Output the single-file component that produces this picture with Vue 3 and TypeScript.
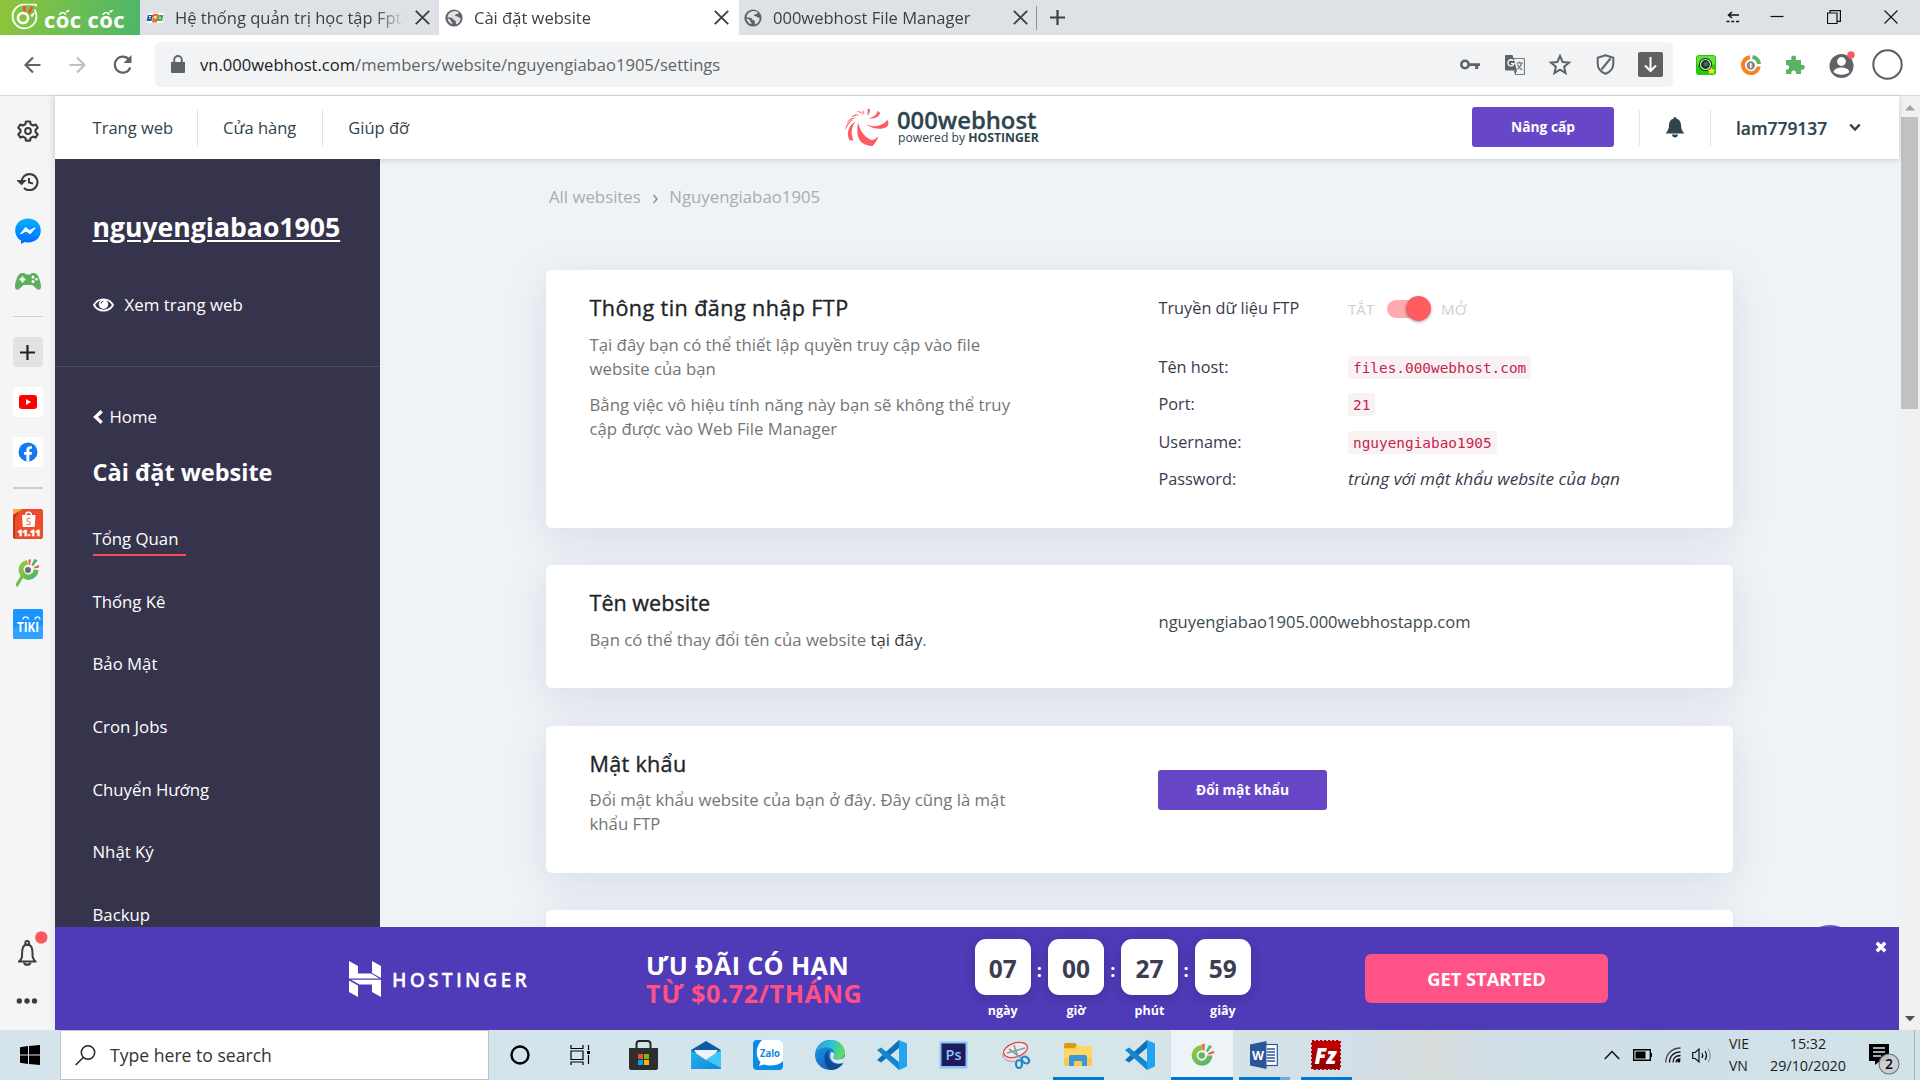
<script setup lang="ts">
interface Tab { title: string; icon: 'fpt' | 'globe'; active?: boolean }
interface TaskItem { id: string; state?: 'open' | 'active' | 'multi' }

const tabs: Tab[] = [
  { title: 'Hệ thống quản trị học tập Fpt', icon: 'fpt' },
  { title: 'Cài đặt website', icon: 'globe', active: true },
  { title: '000webhost File Manager', icon: 'globe' },
]

const topNav: string[] = ['Trang web', 'Cửa hàng', 'Giúp đỡ']

const menu: string[] = ['Tổng Quan', 'Thống Kê', 'Bảo Mật', 'Cron Jobs', 'Chuyển Hướng', 'Nhật Ký', 'Backup']

const ftpRows: { label: string; value: string; code: boolean }[] = [
  { label: 'Tên host:', value: 'files.000webhost.com', code: true },
  { label: 'Port:', value: '21', code: true },
  { label: 'Username:', value: 'nguyengiabao1905', code: true },
  { label: 'Password:', value: 'trùng với mật khẩu website của bạn', code: false },
]

const countdown: { value: string; unit: string }[] = [
  { value: '07', unit: 'ngày' },
  { value: '00', unit: 'giờ' },
  { value: '27', unit: 'phút' },
  { value: '59', unit: 'giây' },
]

const tasks: TaskItem[] = [
  { id: 'cortana' }, { id: 'taskview' }, { id: 'store' }, { id: 'mail' }, { id: 'zalo' },
  { id: 'edge' }, { id: 'vscode' }, { id: 'ps' }, { id: 'snip' },
  { id: 'explorer', state: 'open' }, { id: 'vscode' }, { id: 'coccoc', state: 'active' },
  { id: 'word', state: 'multi' }, { id: 'filezilla', state: 'open' },
]
</script>

<template>
  <div class="desktop">
    <!-- shared icon shapes -->
    <svg class="defs" width="0" height="0">
      <defs>
        <linearGradient id="gMail" x1="0" y1="0" x2="1" y2="1"><stop offset="0" stop-color="#28b4ee" /><stop offset="1" stop-color="#1186d6" /></linearGradient>
        <linearGradient id="gEdgeTop" x1="0" y1="0.3" x2="1" y2="0.5"><stop offset="0" stop-color="#2aa3e0" /><stop offset="0.5" stop-color="#2fc3cf" /><stop offset="1" stop-color="#66dc5a" /></linearGradient>
        <linearGradient id="gEdge" x1="0" y1="0" x2="0.6" y2="1"><stop offset="0" stop-color="#1c9fe4" /><stop offset="1" stop-color="#0d5fc0" /></linearGradient>
        <linearGradient id="gCoc" x1="0" y1="0" x2="1" y2="1"><stop offset="0" stop-color="#9ccb3b" /><stop offset="1" stop-color="#45b36b" /></linearGradient>
        <linearGradient id="gMsg" x1="0" y1="0" x2="0" y2="1"><stop offset="0" stop-color="#00b2ff" /><stop offset="1" stop-color="#006aff" /></linearGradient>
        <linearGradient id="gFz" x1="0" y1="0" x2="0" y2="1"><stop offset="0" stop-color="#c80000" /><stop offset="1" stop-color="#8b0000" /></linearGradient>
      </defs>
      <symbol id="i-globe" viewBox="0 0 18 18">
        <circle cx="9" cy="9" r="8.6" fill="#5f6368" />
        <path d="M8.2 2.2c2-.7 4.6 0 6 1.700c-.9.200-1.300 1-2.600 1.100c-.6.800-1.500.700-1.700 1.700c.9.600 2.200.100 3 1.100c.5 1 2.200.900 2.800 1.400c-.2 3-2 5.300-4.400 6.200c-1.100-1.300.200-2.700-1-3.800c-1.200-.5-2.400-.6-2.500-2.300c-2-.9-4-.4-5.300-1.300c.3-3 2.700-5.300 5.700-5.800z" fill="#dee1e6" />
        <path d="M2.500 9.500c1.200.4 2.700.4 3.300 2c.2 1.300 1.600 1.400 1.800 3.700c-2.700-.6-4.700-2.700-5.100-5.700z" fill="#dee1e6" />
      </symbol>
      <symbol id="i-coc" viewBox="0 0 30 32">
        <path d="M15 4.500a12 12 0 1 0 12 12h-6.200a6 6 0 1 1-6.200-6z" fill="url(#gCoc)" />
        <circle cx="14.700" cy="16.500" r="3.700" fill="#68b55d" />
        <path d="M15.500 10.500l-.4-7 3-.8-.2 8z M22 14l6.500-3 .8 2.800-6.500 1.800z" fill="#ef5a3c" />
        <path d="M19.500 11.500l4-7.200 3 1.800-5 6.800z" fill="#4fb869" />
      </symbol>
    </svg>

    <div class="tabbar">
      <div class="brand">
        <svg width="29" height="30" viewBox="0 0 29 30">
          <path d="M14 2.500a12 12 0 1 0 13.500 12c0-3-.8-5-1.800-6.800M14 2.500h13v2" fill="none" stroke="#fff" stroke-width="1.700" />
          <circle cx="14" cy="16" r="5" fill="none" stroke="#fff" stroke-width="2.600" />
          <path d="M14.500 9.500l-.8-5.500h3.200l-.3 6z" fill="#f04f3a" /><path d="M19 10.500l2.500-6 3 .8-3.600 6.800z" fill="#f04f3a" />
          <path d="M21.500 13l5.500-3.500-4 6z" fill="#fff" />
        </svg>
        <span class="brand-name">cốc cốc</span>
      </div>
      <div v-for="tab in tabs" :key="tab.title" class="tab" :class="{ active: tab.active }">
        <svg v-if="tab.icon === 'fpt'" class="fav" width="18" height="18" viewBox="0 0 18 18">
          <path d="M3 4h14l1 3-2 7H1l-1-3z" fill="#fff" />
          <path d="M2 6h5l-1.500 6H.5z" fill="#2557a7" /><path d="M7 4.800h5.500L11 13.500H6z" fill="#f26f21" /><path d="M12.500 6h5L16 12h-5z" fill="#3aa648" />
          <path d="M3 7.500h2M3 9.300h1.500M8.500 7.500h1.500v1.500H8.200zM14 7.500v3" stroke="#fff" stroke-width="1" fill="none" />
        </svg>
        <svg v-else class="fav" width="18" height="18"><use href="#i-globe" /></svg>
        <span class="tab-title">{{ tab.title }}</span>
        <svg class="tab-x" width="15" height="15" viewBox="0 0 15 15"><path d="M.8.8l13.400 13.400M14.200.8L.8 14.200" stroke="#3c4043" stroke-width="1.900" /></svg>
      </div>
      <div class="newtab">
        <svg width="15" height="15" viewBox="0 0 15 15"><path d="M7.500 0v15M0 7.500h15" stroke="#3c4043" stroke-width="2.200" /></svg>
      </div>
      <div class="winctl">
        <svg class="w-arrow" width="14" height="12" viewBox="0 0 14 12"><path d="M13 4H3M6 1L2.500 4 6 7" fill="none" stroke="#111" stroke-width="1.500" /><path d="M.5 10.500h13" stroke="#111" stroke-width="1.500" stroke-dasharray="3 1.800" /></svg>
        <svg class="w-min" width="14" height="12" viewBox="0 0 14 12"><path d="M.5 5.500h13" stroke="#111" stroke-width="1.200" /></svg>
        <svg class="w-max" width="14" height="14" viewBox="0 0 14 14"><path d="M.5 3h9.500v10.500H.5zM3 3V.6h10.400v10.800H10" fill="none" stroke="#111" stroke-width="1.200" /></svg>
        <svg class="w-close" width="14" height="14" viewBox="0 0 14 14"><path d="M.5.5l13 13M13.500.5l-13 13" stroke="#111" stroke-width="1.100" /></svg>
      </div>
    </div>

    <div class="toolbar">
      <div class="cell"><svg width="17" height="18" viewBox="0 0 17 18"><path d="M16.500 9H2M9 1.500L1.500 9 9 16.500" fill="none" stroke="#5f6368" stroke-width="2.200" /></svg></div>
      <div class="cell"><svg width="17" height="18" viewBox="0 0 17 18"><path d="M.5 9H15M8 1.500L15.500 9 8 16.500" fill="none" stroke="#bdc1c6" stroke-width="2.200" /></svg></div>
      <div class="cell"><svg width="20" height="20" viewBox="0 0 20 20"><path d="M17.300 12.500A8 8 0 1 1 16 4.500" fill="none" stroke="#5f6368" stroke-width="2.200" /><path d="M18.500 0v8h-8z" fill="#5f6368" /></svg></div>
      <div class="omnibox">
        <svg class="lock" width="14" height="18" viewBox="0 0 14 18"><path d="M0 7h14v10q0 1-1 1H1q-1 0-1-1z" fill="#5f6368" /><path d="M3.200 7.500V4.800a3.800 3.800 0 0 1 7.600 0v2.700" fill="none" stroke="#5f6368" stroke-width="1.900" /></svg>
        <span class="url">vn.000webhost.com<span class="path">/members/website/nguyengiabao1905/settings</span></span>
        <div class="omni-icons">
          <div class="cell key"><svg width="20" height="11" viewBox="0 0 20 11"><circle cx="5" cy="5.500" r="3.700" fill="none" stroke="#5f6368" stroke-width="2.600" /><path d="M9 4.200h11v2.800h-1.800v3h-3v-3H9z" fill="#5f6368" /></svg></div>
          <div class="cell key">
            <svg width="20" height="20" viewBox="0 0 20 20">
              <path d="M8.500 3.500h10q1 0 1 1v14q0 1-1 1h-8z" fill="none" stroke="#7a7d81" stroke-width="1.200" />
              <path d="M1 0h6.500L12 15.500H1q-1 0-1-1V1q0-1 1-1z" fill="#5f6368" /><path d="M9 15.500h3l-1.700 4z" fill="#5f6368" />
              <path d="M8.400 5.900A3.100 3.100 0 1 0 9 8.600H6" fill="none" stroke="#fff" stroke-width="1.300" />
              <path d="M11.500 8h6.500M14.700 6.500V8M16.500 8c-.5 3-2 4.800-4 6M12.500 9.500c1 2.500 2.500 4 4.500 5.500" fill="none" stroke="#6f7276" stroke-width="1.200" />
            </svg>
          </div>
          <div class="cell key"><svg width="22" height="21" viewBox="0 0 22 21"><path d="M11 2l2.600 6 6.400.6-4.900 4.200 1.500 6.300L11 15.700l-5.600 3.400 1.500-6.300L2 8.600 8.400 8z" fill="none" stroke="#5f6368" stroke-width="2" /></svg></div>
          <div class="cell"><svg width="19" height="21" viewBox="0 0 19 21"><path d="M9.500 1.200l7.800 2.600v6c0 5-3.300 8.300-7.800 10.100C5 18.100 1.700 14.800 1.700 9.800v-6z M5.500 15.500L14.500 4.500" fill="none" stroke="#5f6368" stroke-width="2" /></svg></div>
          <div class="cell"><svg width="25" height="25" viewBox="0 0 25 25"><rect width="25" height="25" rx="2" fill="#5f6062" /><path d="M12.500 5v14M7 13.500l5.500 5.500 5.500-5.500" fill="none" stroke="#fff" stroke-width="2" /></svg></div>
        </div>
      </div>
      <div class="ext-icons">
        <div class="cell">
          <svg width="20" height="20" viewBox="0 0 20 20"><rect width="20" height="20" rx="3" fill="#28c80b" /><rect x="1" y="1" width="18" height="9" rx="2" fill="#66e23c" /><circle cx="9.500" cy="9.500" r="6.600" fill="#10331a" /><circle cx="9.500" cy="9.500" r="5" fill="none" stroke="#d4e9d5" stroke-width="1.200" /><circle cx="10" cy="9" r="2.600" fill="#2f7a3c" /><path d="M15.500 12l1.200 2.500 2.800.3-2 1.900.6 2.800-2.600-1.400-2.500 1.400.5-2.800-2-1.900 2.800-.3z" fill="#ffe02e" /></svg>
        </div>
        <div class="cell">
          <svg width="20" height="20" viewBox="0 0 20 20"><path d="M9 2.200A8 8 0 1 0 17.800 11.500" fill="none" stroke="#f5831f" stroke-width="4" /><path d="M11.500 2a7.800 7.800 0 0 1 6.500 7" fill="none" stroke="#5bb35f" stroke-width="4" /><circle cx="9.800" cy="10.500" r="4.200" fill="#8a8a8a" /><path d="M9.800 8.300v4.500" stroke="#fff" stroke-width="1.600" /></svg>
        </div>
        <div class="cell"><svg width="19" height="20" viewBox="0 0 19 20"><path d="M0 5h5.500C5 3.500 5 .5 7.700.5S10.300 3.500 9.800 5H15v5c1.500-.5 3.800 0 3.800 2.300S16.500 15 15 14.500V19H10c.5-2-.5-3.500-2.300-3.500S5 17 5.500 19H0v-4.500c2 .3 3.200-.6 3.200-2.300S2 9.800 0 10z" fill="#5cb260" /></svg></div>
        <div class="cell profile">
          <svg width="26" height="30" viewBox="0 0 26 30"><circle cx="12.500" cy="16" r="12" fill="#5f6368" /><circle cx="12.500" cy="11.500" r="4.400" fill="#fff" /><path d="M4.500 22c1-3.800 5-4.600 8-4.600s7 .8 8 4.600c-2 2-5 2.700-8 2.700s-6-.7-8-2.700z" fill="#fff" /><circle cx="22" cy="5" r="3.700" fill="#fc5a5e" /></svg>
        </div>
        <div class="cell last"><svg width="31" height="31" viewBox="0 0 31 31"><circle cx="15.500" cy="15.500" r="14.200" fill="#fff" stroke="#5b5d60" stroke-width="2" /></svg></div>
      </div>
    </div>

    <div class="main">
      <div class="strip">
        <div class="sicon"><svg width="22" height="22" viewBox="0 0 22 22"><path d="M9 1.500h4l.7 2.800 2.400 1.200 2.600-1 2 3.300-2.100 2v2.400l2.100 2-2 3.300-2.600-.9-2.400 1.300-.7 2.700H9l-.7-2.700-2.400-1.300-2.600.9-2-3.300 2.100-2V9.800l-2.100-2 2-3.300 2.600 1 2.400-1.200z" fill="none" stroke="#3c3c3c" stroke-width="2.200" stroke-linejoin="round" /><circle cx="11" cy="11" r="2.900" fill="none" stroke="#3c3c3c" stroke-width="2" /></svg></div>
        <div class="sicon hist"><svg width="22" height="18" viewBox="0 0 22 18"><path d="M4.500 10A8 8 0 1 1 7 15" fill="none" stroke="#3c3c3c" stroke-width="2.100" /><path d="M.5 7.500l4 4 4-4z" fill="#3c3c3c" stroke="#3c3c3c" stroke-width="1.200" /><path d="M12 5v4.500l4 1" fill="none" stroke="#3c3c3c" stroke-width="2" /></svg></div>
        <div class="sicon"><svg width="26" height="26" viewBox="0 0 26 26"><path d="M13 .5c7.500 0 12.800 5 12.800 12S20.500 24.500 13 24.500c-1.200 0-2.300-.1-3.400-.4L6 26v-3.500C2.400 20.400.2 16.800.2 12.500.2 5.500 5.500.5 13 .5z" fill="url(#gMsg)" /><path d="M5.500 16l5-6.500 4 3 5.800-2.700-5.200 6-4-2.900z" fill="#fff" stroke="#fff" stroke-width="1" stroke-linejoin="round" /></svg></div>
        <div class="sicon"><svg width="26" height="17" viewBox="0 0 26 17"><path d="M6.500 0h3l1.200 1.500h4.600L16.500 0h3C23 0 26 9 26 13.500c0 3.500-2.500 4-4.500 2.200L17.500 12h-9l-4 3.700C2.500 17.500 0 17 0 13.500 0 9 3 0 6.500 0z" fill="#5cb05a" /><path d="M7.500 3.500v6M4.500 6.500h6" stroke="#fff" stroke-width="2" /><g fill="#fff"><circle cx="18" cy="4" r="1.500" /><circle cx="18" cy="8.500" r="1.500" /><circle cx="21.500" cy="6.300" r="1.300" /></g></svg></div>
        <div class="ssep first"></div>
        <div class="tile plus"><svg width="15" height="15" viewBox="0 0 15 15"><path d="M7.500 0v15M0 7.500h15" stroke="#222" stroke-width="2.200" /></svg></div>
        <div class="tile"><svg width="18" height="14" viewBox="0 0 18 14"><rect width="18" height="14" rx="3" fill="#f00" /><path d="M7 4l5 3-5 3z" fill="#fff" /></svg></div>
        <div class="tile"><svg width="20" height="20" viewBox="0 0 20 20"><circle cx="10" cy="10" r="9.500" fill="#1877f2" /><path d="M8.400 19.500v-6.800H6V10h2.400V8c0-2.500 1.500-3.800 3.700-3.800l1.900.1v2.400h-1.200c-1.200 0-1.500.6-1.500 1.500V10H14l-.4 2.700h-2.300v6.800z" fill="#fff" /></svg></div>
        <div class="ssep second"></div>
        <div class="tile shopee">
          <svg width="30" height="30" viewBox="0 0 30 30"><rect width="30" height="30" rx="2" fill="#ee4d2d" /><path d="M0 2q0-2 2-2h7L0 7z" fill="#f9b233" /><path d="M0 6l6-4-4 7v20H0z" fill="#c4321b" /><path d="M9 6h13.500l-.8 12H9.800z" fill="#fff" /><path d="M12.500 7c0-5 6-5 6 0" fill="none" stroke="#fff" stroke-width="1.300" /><text x="15.700" y="15.500" text-anchor="middle" class="svgt" font-size="9.500" font-weight="400" fill="#ee4d2d">S</text><text x="16" y="26.800" text-anchor="middle" class="svgt" font-size="9" font-weight="800" fill="#fff" stroke="#fff" stroke-width=".5" textLength="23">11.11</text></svg>
        </div>
        <div class="sicon coc">
          <svg width="23" height="28" viewBox="0 0 23 28"><path d="M11 1a10 10 0 1 0 11.500 10l-5-.5a5 5 0 1 1-5.500-5z" fill="url(#gCoc)" /><circle cx="12" cy="11" r="3" fill="#6b6b70" /><path d="M5.500 18.500L1 26" stroke="#74bf4b" stroke-width="3.200" stroke-linecap="round" /><path d="M12.500 5.500l0-5h2.500l-1 5.500zM18 8l5-2v2.500L18.500 9.500z" fill="#f05a3c" /><path d="M15.500 6l3-6 3 1.200-4.500 6z" fill="#43ae6e" /></svg>
        </div>
        <div class="tile tiki">
          <svg width="30" height="30" viewBox="0 0 30 30"><rect width="30" height="30" rx="2" fill="#1a94ff" /><path d="M0 20c8-5 14 2 30-4v12q0 2-2 2H2q-2 0-2-2z" fill="#2fa3ff" /><text x="15" y="23" text-anchor="middle" class="svgt" font-size="14" font-weight="700" fill="#fff" textLength="22" lengthAdjust="spacingAndGlyphs">TIKI</text><path d="M10 10.500c.5-3.500 5-3.500 5.500 0M22 10.500c.5-3.500 4.500-3.500 5 0" fill="none" stroke="#fff" stroke-width="1.300" /></svg>
        </div>
        <div class="strip-bottom">
          <svg class="sbell" width="32" height="36" viewBox="0 0 32 36"><path d="M2 30.500h18.500M4 30l2-4c0-8 .5-12.500 5.300-12.500s5.300 4.500 5.300 12.500l2 4" fill="none" stroke="#3c3c3c" stroke-width="2" /><circle cx="11.200" cy="12" r="2" fill="none" stroke="#3c3c3c" stroke-width="1.800" /><path d="M8 31.500c.5 3 6 3 6.500 0" fill="none" stroke="#3c3c3c" stroke-width="2" /><circle cx="25.300" cy="6.500" r="6.200" fill="#fc5a5e" /></svg>
          <svg width="22" height="6" viewBox="0 0 22 6"><g fill="#3c3c3c"><circle cx="3.300" cy="3" r="2.700" /><circle cx="11" cy="3" r="2.700" /><circle cx="18.500" cy="3" r="2.700" /></g></svg>
        </div>
      </div>

      <div class="page">
        <header class="phead">
          <nav class="pnav"><span v-for="n in topNav" :key="n">{{ n }}</span></nav>
          <div class="plogo">
            <svg width="44" height="38" viewBox="0 0 44 38">
              <g fill="#ff5c62">
                <path d="M13 13.500c2 7 5 14 13.500 17.500 2.500 0 4.500-1.500 7-3.700-1.500 4.700-3.500 7-6 9.700-9-.5-14-4.500-15-12-.5-4 0-8 .5-11.500z" />
                <path d="M20 14.500c6 4 15 4.500 22.500-3.500 2.500 4.500 0 9-9 8.700-6-.4-10.500-2.200-13.500-5.200z" />
                <path d="M10.500 12.500C3.500 16.500 1 24 4.500 31.500L8.500 31.500C5.500 24 6.500 18 10.500 12.500z" />
                <path d="M8.500 10.500C3 12.500.5 16 .5 21.500 2 16.500 4.500 13.500 8.500 10.500z" />
                <path d="M11 8.500C6 8.500 3 11 1.500 14 4.500 11.500 7 10 11 8.500z" />
                <path d="M14 6c-3.500-1-6 0-8 2.500 3-1.500 5-1.700 8-2.500z" /><path d="M18 5c-2-2.500-4-3-6.500-2.500 2.500.5 4 1.300 6.500 2.500z" />
                <path d="M22 6.500c1-2.500 1-4.500.5-6.500h2.500c.3 2.500-.5 5-3 6.500z" />
                <path d="M23.500 9.500c4-1 8-3 9-7.500 1.500.5 2.500 1.500 2.500 2.500-1.500 4-6.500 5.500-11.500 5z" />
                <path d="M17 6.500c1.500-2 1-4 0-6 2.500 2 2.500 4 0 6z" />
              </g>
            </svg>
            <div class="plogo-text"><span class="l1">000webhost</span><span class="l2">powered by <b>HOSTINGER</b></span></div>
          </div>
          <button class="btn upgrade">Nâng cấp</button>
          <div class="pbell"><svg width="20" height="21" viewBox="0 0 20 21"><path d="M10 0q1.500 0 1.600 1.700c3 .8 4.200 3 4.400 6 .2 4.500 1.200 6.300 3.500 8.800H.5c2.300-2.500 3.300-4.300 3.500-8.800.2-3 1.400-5.200 4.400-6Q8.500 0 10 0zM7 17.500h6c0 4-6 4-6 0z" fill="#2f444e" /></svg></div>
          <div class="puser"><span>lam779137</span><svg width="12" height="9" viewBox="0 0 12 9"><path d="M1.200 1.500L6 6.500l4.800-5" fill="none" stroke="#2f444e" stroke-width="2.500" /></svg></div>
        </header>

        <div class="pbody">
          <aside class="side">
            <div class="side-top">
              <div class="site">nguyengiabao1905</div>
              <div class="view">
                <svg width="21" height="14" viewBox="0 0 21 14"><path d="M1 7c4-7.500 15-7.500 19 0-4 7.500-15 7.500-19 0z" fill="none" stroke="#fff" stroke-width="1.800" /><circle cx="10.500" cy="6.200" r="4.700" fill="#fff" /><path d="M8 5.500q.3-2 2.300-2.300" stroke="#36344c" stroke-width="1" fill="none" /></svg>
                <span>Xem trang web</span>
              </div>
            </div>
            <div class="home"><svg width="10" height="14" viewBox="0 0 10 14"><path d="M8.700 1.200L2.500 7l6.200 5.800" fill="none" stroke="#fff" stroke-width="3.300" /></svg><span>Home</span></div>
            <div class="side-title">Cài đặt website</div>
            <ul class="menu"><li v-for="(m, i) in menu" :key="m"><span :class="{ current: i === 0 }">{{ m }}</span></li></ul>
          </aside>

          <section class="content">
            <div class="crumbs"><span>All websites</span><svg class="gt" width="7" height="10" viewBox="0 0 7 10"><path d="M1.500 1L5 5 1.500 9" fill="none" stroke="#909394" stroke-width="1.600" /></svg><span>Nguyengiabao1905</span></div>

            <div class="card ftp">
              <div class="desc">
                <h2>Thông tin đăng nhập FTP</h2>
                <p>Tại đây bạn có thể thiết lập quyền truy cập vào file<br>website của bạn</p>
                <p>Bằng việc vô hiệu tính năng này bạn sẽ không thể truy<br>cập được vào Web File Manager</p>
              </div>
              <div class="info">
                <div class="row toggle-row">
                  <span class="lbl">Truyền dữ liệu FTP</span>
                  <span class="onoff">TẮT</span><span class="switch"><i></i></span><span class="onoff">MỞ</span>
                </div>
                <div v-for="r in ftpRows" :key="r.label" class="row">
                  <span class="lbl">{{ r.label }}</span>
                  <code v-if="r.code">{{ r.value }}</code><em v-else>{{ r.value }}</em>
                </div>
              </div>
            </div>

            <div class="card name">
              <div class="desc"><h2>Tên website</h2><p>Bạn có thể thay đổi tên của website <a>tại đây</a>.</p></div>
              <div class="info domain">nguyengiabao1905.000webhostapp.com</div>
            </div>

            <div class="card pass">
              <div class="desc"><h2>Mật khẩu</h2><p>Đổi mật khẩu website của bạn ở đây. Đây cũng là mật<br>khẩu FTP</p></div>
              <div class="info"><button class="btn change">Đổi mật khẩu</button></div>
            </div>

            <div class="card next"></div>
            <div class="chat"></div>
          </section>
        </div>

        <div class="banner">
          <svg class="hmark" width="32" height="36" viewBox="0 0 32 36"><path d="M0 0l9 5v7.500h13l8.500 5H0zM23 0l9 5v12l-9-5zM32 36l-9-5v-7.500H10.500L2 18.800h30zM9 36l-9-5V19.500l9 5z" fill="#fff" /></svg>
          <span class="hname">HOSTINGER</span>
          <div class="offer"><div>ƯU ĐÃI CÓ HẠN</div><div class="pink">TỪ $0.72/THÁNG</div></div>
          <div class="timer">
            <template v-for="(c, i) in countdown" :key="c.unit">
              <span v-if="i" class="colon">:</span>
              <div class="unit"><div class="num">{{ c.value }}</div><div class="ulabel">{{ c.unit }}</div></div>
            </template>
          </div>
          <button class="cta">GET STARTED</button>
          <svg class="bx" width="12" height="12" viewBox="0 0 12 12"><path d="M1.800 1.800l8.400 8.400M10.200 1.800l-8.400 8.400" stroke="#fff" stroke-width="3.500" /></svg>
        </div>
      </div>

      <div class="scroll">
        <svg width="10" height="6" viewBox="0 0 10 6"><path d="M0 5.500L5 0l5 5.500z" fill="#a3a3a3" /></svg>
        <div class="thumb"></div>
        <svg class="down" width="10" height="6" viewBox="0 0 10 6"><path d="M0 0l5 5.500L10 0z" fill="#505050" /></svg>
      </div>
    </div>

    <div class="taskbar">
      <div class="start"><svg width="20" height="20" viewBox="0 0 20 20"><path d="M0 2.300L8 1v8.500H0zM9 .9L20 0v9.500H9zM0 10.500h8V19l-8-1.300zM9 10.500h11V20L9 18.900z" fill="#000" /></svg></div>
      <div class="search"><svg width="21" height="21" viewBox="0 0 21 21"><circle cx="13" cy="7.500" r="6.700" fill="none" stroke="#222" stroke-width="1.500" /><path d="M8.200 12.500L.7 20" stroke="#222" stroke-width="1.500" /></svg><span>Type here to search</span></div>
      <div v-for="(t, i) in tasks" :key="i" class="task" :class="[t.state, t.id]">
        <svg v-if="t.id === 'cortana'" width="20" height="20" viewBox="0 0 20 20"><circle cx="10" cy="10" r="8.500" fill="none" stroke="#000" stroke-width="2.400" /></svg>
        <svg v-else-if="t.id === 'taskview'" width="21" height="20" viewBox="0 0 21 20"><path d="M1 0v3.500h12V0M1 6h12v8.500H1zM1 20v-3h12v3M18.500 0v5M18.500 10v9" fill="none" stroke="#000" stroke-width="1.200" /><rect x="17" y="6" width="3" height="3" /></svg>
        <svg v-else-if="t.id === 'store'" width="30" height="30" viewBox="0 0 30 30"><path d="M7.500 9V4q0-3 3-3h8q3 0 3 3v5" fill="none" stroke="#262626" stroke-width="2" /><path d="M0 8h29v20q0 2-2 2H2q-2 0-2-2z" fill="#2e2e2e" /><path d="M9 14h5v5H9z" fill="#f25022" /><path d="M15 14h5v5h-5z" fill="#7fba00" /><path d="M9 20h5v5H9z" fill="#00a4ef" /><path d="M15 20h5v5h-5z" fill="#ffb900" /></svg>
        <svg v-else-if="t.id === 'mail'" width="30" height="28" viewBox="0 0 30 28"><path d="M0 9L15 0l15 9v3H0z" fill="#0c5aa8" /><path d="M3 9h24l-8 12H11z" fill="#f1f1f3" /><path d="M0 9l15 10L30 9v19H0z" fill="url(#gMail)" /><path d="M15 19L30 9v18z" fill="#3fc8f5" /></svg>
        <svg v-else-if="t.id === 'zalo'" width="30" height="30" viewBox="0 0 30 30"><rect width="30" height="30" rx="4" fill="#0a8be3" /><path d="M9 0h17q4 0 4 4v17q-4 4.500-13 4.500-4 0-6-1L6 26l1.500-4C2 17 2.500 6 9 0z" fill="#fff" /><text x="17" y="17" text-anchor="middle" class="svgt" font-size="10" font-weight="700" fill="#1089e0" textLength="20" lengthAdjust="spacingAndGlyphs">Zalo</text></svg>
        <svg v-else-if="t.id === 'edge'" width="30" height="30" viewBox="0 0 30 30"><circle cx="15" cy="15" r="15" fill="url(#gEdge)" /><path d="M1 11C4 3.500 10 0 16 0c8.500 0 14 6.500 14 12.500 0 4.500-3.500 7-7.500 7-3 0-4.500-1-4.500-2.500 0-1 1.200-1.500 1.200-3.500 0-3.500-3-6-7-6-5.500 0-9.500 2-11.200 3.500z" fill="url(#gEdgeTop)" /><path d="M9.500 18c0-4 2-7 5-8-4 6 1 14.500 8 14.500 2.500 0 4.500-.8 6-1.700C26 27.500 21 30 16.500 30 12 29 9.500 23 9.500 18z" fill="#114a8f" /><path d="M16 12c2.500-.5 4 2 2.500 4.500-1 1.500.5 3 4 3 4 0 6-1 7.200-3.500.3 3-.5 5.500-1.700 6.800-2 .9-4 1-6 .7-5-.5-8.500-5.500-6-11.500z" fill="#d8e7ee" /></svg>
        <svg v-else-if="t.id === 'vscode'" width="30" height="30" viewBox="0 0 30 30"><path d="M22 0v8L4 22.500 0 20z" fill="#0f71b8" /><path d="M0 10l4-2.500L22 22v8z" fill="#1488cf" /><path d="M22 0l8 3.500v23L22 30z" fill="#24a4f0" /></svg>
        <svg v-else-if="t.id === 'ps'" width="30" height="28" viewBox="0 0 30 28"><rect x=".5" y=".5" width="28" height="27" fill="#8cc4f5" /><rect x="2.500" y="2.500" width="24" height="22.500" fill="#1f1a5b" /><text x="14.500" y="19" text-anchor="middle" class="svgt" font-size="14.500" font-weight="600" fill="#88c6f8" textLength="16" lengthAdjust="spacingAndGlyphs">Ps</text></svg>
        <svg v-else-if="t.id === 'snip'" width="29" height="29" viewBox="0 0 29 29"><ellipse cx="13.500" cy="9" rx="12.300" ry="7" transform="rotate(-18 13.500 9)" fill="#e9eef0" stroke="#e0474b" stroke-width="1.300" /><path d="M1 12c-1 6 3 8.500 12 8.500" fill="none" stroke="#e58083" stroke-width="1" /><path d="M12 4l4 12M5 12l18-5M7 8l12 9" stroke="#8a9aa2" stroke-width="1.600" /><ellipse cx="17" cy="23" rx="3" ry="4" fill="none" stroke="#1f86c9" stroke-width="2.200" /><ellipse cx="23.500" cy="19" rx="4" ry="3" transform="rotate(35 23.500 19)" fill="none" stroke="#1f86c9" stroke-width="2.200" /></svg>
        <svg v-else-if="t.id === 'explorer'" width="28" height="24" viewBox="0 0 28 24"><path d="M0 2q0-2 2-2h9l2 3h13q2 0 2 2v16q0 2-2 2H2q-2 0-2-2z" fill="#fdc94a" /><path d="M0 2q0-2 2-2h9l2 2-2.500 3H0z" fill="#d99a14" /><path d="M0 6h11l2.500-3H28v12H0z" fill="#ffd766" /><path d="M5 23v-9q0-2 2-2h14q2 0 2 2v9h-5v-5h-8v5z" fill="#3a97de" /></svg>
        <svg v-else-if="t.id === 'coccoc'" width="26" height="28"><use href="#i-coc" /></svg>
        <svg v-else-if="t.id === 'word'" width="28" height="28" viewBox="0 0 28 28"><rect x="13" y="3.500" width="14.300" height="21" fill="#fff" stroke="#2b579a" stroke-width="1.200" /><path d="M17 8h8M17 11h8M17 14h8M17 17h8M17 20h8" stroke="#2b579a" stroke-width="1.500" /><path d="M0 3.500L16.500 0v28L0 24.500z" fill="#2b579a" /><text x="8" y="19" text-anchor="middle" class="svgt" font-size="13" font-weight="700" fill="#fff" textLength="12" lengthAdjust="spacingAndGlyphs">W</text></svg>
        <svg v-else width="30" height="30" viewBox="0 0 30 30"><rect x="1" y="1" width="28" height="28" fill="url(#gFz)" stroke="#b20000" stroke-width="2" stroke-dasharray="2.300 1.700" /><text x="14.500" y="23.500" text-anchor="middle" class="svgt" font-size="22" font-weight="800" font-style="italic" fill="#fff" textLength="22" lengthAdjust="spacingAndGlyphs">Fz</text></svg>
      </div>
      <div class="tray">
        <svg class="t-up" width="16" height="10" viewBox="0 0 16 10"><path d="M.8 9L8 1.500 15.200 9" fill="none" stroke="#111" stroke-width="1.500" /></svg>
        <svg class="t-bat" width="20" height="12" viewBox="0 0 20 12"><path d="M.7.7h16.600v10.600H.7z" fill="none" stroke="#000" stroke-width="1.400" /><path d="M2.500 2.500h10v7h-10zM17.500 4H19v4h-1.500z" /></svg>
        <svg class="t-wifi" width="16" height="16" viewBox="0 0 16 16"><g fill="none" stroke="#111" stroke-width="1.300"><path d="M.8 15.500C.8 7 7 1 15.500 1" opacity=".75" /><path d="M4.500 15.500C4.500 9 9 4.800 15.500 4.800" /><path d="M8 15.500c0-4.500 3-7 7.500-7" /><path d="M11 15.500c0-2 1.500-3.500 4.500-3.500" /></g><circle cx="13.800" cy="14" r="1.600" /></svg>
        <svg class="t-vol" width="20" height="17" viewBox="0 0 20 17"><path d="M.7 5.500h2.500L7 2v13l-3.800-3.500H.7z" fill="none" stroke="#111" stroke-width="1.200" /><path d="M10 6q1.500 2.500 0 5M13 4q3 4.500 0 9" fill="none" stroke="#111" stroke-width="1.200" /><path d="M16 1.500q4.500 7 0 14" fill="none" stroke="#8b9aa0" stroke-width="1.200" /></svg>
        <div class="lang"><span>VIE</span><span>VN</span></div>
        <div class="clock"><span>15:32</span><span>29/10/2020</span></div>
        <svg class="t-note" width="32" height="31" viewBox="0 0 32 31"><path d="M0 0h20v17H11l-5 4v-4H0z" /><path d="M4 4h12M4 8h12M4 12h8" stroke="#d4e2e8" stroke-width="1.300" /><circle cx="20" cy="20" r="10" fill="#c9ced1" fill-opacity=".93" stroke="#6b7073" stroke-width="1.100" /><text x="20" y="24.800" text-anchor="middle" class="svgt" font-size="13.500" font-weight="600">2</text></svg>
        <div class="peek"></div>
      </div>
    </div>
  </div>
</template>

<style>
html, body { margin: 0; overflow: hidden; }
</style>

<style scoped>
.desktop { width: 1920px; height: 1080px; overflow: hidden; display: flex; flex-direction: column; background: #fff; color: #2f444e; font: 400 16.500px/24px "Open Sans", "Noto Sans", sans-serif; }
.desktop * { box-sizing: border-box; }
svg { display: block; flex: none; }
.defs { position: absolute; }
.svgt { font-family: "Open Sans", "Noto Sans", sans-serif; }
span, .site, .side-title, h2, p { white-space: nowrap; }

/* tab strip */
.tabbar { height: 35px; flex: none; display: flex; background: #dee1e6; }
.brand { width: 140px; display: flex; align-items: center; padding: 0 0 1px 9px; gap: 6px; background: linear-gradient(100deg, #8fc53a, #4cb76a); }
.brand-name { color: #fff; font: 700 22px/30px "Open Sans", sans-serif; letter-spacing: .4px; padding-top: 3px; }
.tab { width: 299px; display: flex; align-items: center; padding: 0 10px 0 5px; color: #3c4043; font-size: 16.550px; }
.tab:nth-child(2) { padding: 0 9px 0 6px; }
.tab.active { width: 300px; padding: 0 10.500px 0 6px; background: #fff; }
.fav { margin-right: 11px; }
.tab-title { flex: 1; overflow: hidden; -webkit-mask-image: linear-gradient(90deg, #000 200px, transparent 230px); mask-image: linear-gradient(90deg, #000 200px, transparent 230px); }
.tab-x { margin-left: 8px; }
.newtab { height: 24px; margin-top: 6px; border-left: 1px solid #8d9196; padding: 4px 0 0 13px; margin-left: -2px; }
.winctl { margin-left: auto; display: flex; align-items: center; padding: 0 22px 2px 0; }
.w-min { margin-left: 30px; }
.w-max { margin-left: 43px; }
.w-close { margin-left: 43px; }

/* toolbar */
.toolbar { height: 61px; flex: none; display: flex; align-items: flex-start; padding: 7px 10px 0; border-bottom: 1px solid #d6d8db; background: #fff; }
.cell { width: 45px; height: 45px; display: flex; align-items: center; justify-content: center; flex: none; }
.cell.key { padding-right: 2px; }
.omnibox { width: 1518px; height: 45px; margin-left: 10px; background: #f1f3f4; border-radius: 5px; display: flex; align-items: center; }
.lock { margin: -2px 15px 0 16px; }
.url { color: #202124; font-size: 16.580px; }
.path { color: #5f6368; }
.omni-icons { margin-left: auto; display: flex; }
.ext-icons { display: flex; margin-left: 10px; }
.profile { padding-left: 2px; }
.last { margin-left: 2px; }

.main { height: 934px; flex: none; display: flex; }

/* browser side strip */
.strip { width: 55px; flex: none; display: flex; flex-direction: column; align-items: center; background: linear-gradient(90deg, #f5f5f5 47px, #ebebeb 55px); padding-top: 10px; }
.sicon { height: 50px; display: flex; align-items: center; }
.sicon.hist { padding-top: 2px; }
.ssep { width: 30px; height: 1px; background: #cfcfcf; }
.ssep.first { margin: 10px 0 20px; }
.tile { width: 30px; height: 30px; margin-bottom: 20px; border-radius: 4px; background: #fff; display: flex; align-items: center; justify-content: center; flex: none; }
.tile.plus { background: #e2e2e2; }
.ssep.second { height: 2px; background: #cbcbcb; margin: 0 0 20px; }
.tile.shopee { margin-bottom: 9px; }
.tile.tiki { margin-top: 11px; }
.strip-bottom { margin-top: auto; align-self: flex-start; padding: 0 0 26px 16px; }
.sbell { margin-bottom: 31px; }

/* page header */
.page { width: 1844px; flex: none; display: flex; flex-direction: column; }
.phead { height: 63px; flex: none; display: flex; align-items: center; background: #fff; position: relative; z-index: 1; box-shadow: 0 1px 5px rgba(60, 70, 90, .22); }
.pnav { display: flex; padding-left: 12.600px; width: 790px; color: #2f444e; }
.pnav span { padding: 6px 25px; border-left: 1px solid #dfe4ea; }
.pnav span:first-child { border-left: 0; padding-right: 24px; }
.pnav span:nth-child(2) { padding-right: 26px; }
.plogo { display: flex; align-items: center; width: 560px; gap: 8px; }
.plogo-text { display: flex; flex-direction: column; padding-bottom: 2px; }
.l1 { font-size: 23.800px; font-weight: 600; line-height: 23px; -webkit-text-stroke: .3px #2f444e; }
.l2 { font-size: 12.200px; line-height: 12px; padding-left: 1px; }
.l2 b { font-weight: 700; }
.btn { border: 0; border-radius: 3px; background: #6747c7; color: #fff; height: 40px; font: 700 13.800px/40px "Open Sans", "Noto Sans", sans-serif; padding: 0; }
.upgrade { width: 142px; margin: 0 0 2px 67px; }
.pbell { margin-left: 25px; width: 72px; height: 36px; border: solid #e2e6ec; border-width: 0 1px; display: flex; align-items: center; padding-left: 25px; }
.puser { display: flex; align-items: center; padding-left: 25px; font-weight: 600; font-size: 17.400px; gap: 22px; }
.puser span { -webkit-text-stroke: .2px #2f444e; }

/* page body */
.pbody { height: 768px; flex: none; display: flex; overflow: hidden; }
.side { width: 325px; flex: none; background: #36344c; color: #fff; }
.side-top { height: 208px; padding: 48px 0 0 37.500px; border-bottom: 1px solid #4a4f68; }
.site { font-size: 26.600px; font-weight: 700; line-height: 40px; text-decoration: underline; text-decoration-thickness: 2px; text-underline-offset: 3px; text-decoration-skip-ink: auto; }
.view { display: flex; align-items: center; gap: 11px; padding-top: 46px; font-size: 16.900px; }
.home { display: flex; align-items: center; gap: 7px; padding: 38px 0 0 37.500px; font-size: 16.800px; }
.side-title { font-size: 23.500px; font-weight: 700; line-height: 34px; padding: 26px 0 0 37.500px; }
.menu { list-style: none; margin: 38px 0 0; padding: 0 0 0 37.500px; font-size: 16.750px; }
.menu li { height: 62.700px; }
.menu span { display: inline-block; line-height: 24px; }
.current { border-bottom: 2px solid #fb4b52; padding: 0 8px 3px 0; }

.content { flex: 1; position: relative; padding-left: 166px; background: #eff3f6; }
.crumbs { padding: 26px 0 0 3px; height: 111px; display: flex; color: #aaacae; font-size: 16.800px; }
.gt { margin: 9px 10.500px 0 11px; }
.card { width: 1187px; background: #fff; border-radius: 6px; box-shadow: 0 10px 40px rgba(120, 135, 180, .2); display: flex; position: relative; }
.ftp { height: 258px; margin-bottom: 37px; }
.name { height: 123px; margin-bottom: 38px; }
.pass { height: 147px; margin-bottom: 37px; }
.next { height: 60px; }
.desc { width: 612px; flex: none; padding: 23px 0 0 43.500px; }
h2 { margin: 0 0 10px; font-size: 21.600px; font-weight: 400; line-height: 30px; color: #212529; -webkit-text-stroke: .35px #212529; }
.ftp h2 { letter-spacing: .4px; }
.pass h2 { letter-spacing: .3px; margin-bottom: 9px; }
p { margin: 0 0 12px; color: #757575; font-size: 16.750px; }
p a { color: #2f3e48; }
.info { flex: 1; color: #3a3a4e; }
.row { display: flex; align-items: center; height: 37.500px; font-size: 16.300px; }
.toggle-row { height: 37px; margin: 19px 0 22px; }
.lbl { width: 190px; flex: none; padding-left: .5px; }
.onoff { color: #cfcfcf; font-size: 15.200px; width: 25px; padding-top: 2px; }
.switch { width: 40px; height: 18px; border-radius: 9px; background: #ffaaae; margin: 2px 14px 0; display: flex; justify-content: flex-end; align-items: center; }
.switch i { width: 25px; height: 25px; flex: none; border-radius: 50%; background: #ff5c62; margin-right: -4px; box-shadow: 0 1px 3px rgba(0, 0, 0, .35); }
code { font: 14.400px/22px "DejaVu Sans Mono", monospace; color: #c7254e; background: #f9f2f4; border-radius: 3px; padding: 1px 5px 0; margin-top: 1px; }
em { white-space: nowrap; font-size: 17.200px; }
.domain { padding: 45px 0 0 .5px; color: #3d4a52; font-size: 16.550px; }
.change { width: 169px; margin-top: 44px; }
.chat { position: absolute; left: 1420px; top: 766px; width: 60px; height: 60px; border-radius: 50%; background: #6b55c5; }

/* promotion banner */
.banner { height: 103px; flex: none; background: #4f3ab7; display: flex; color: #fff; position: relative; }
.hmark { margin: 34px 0 0 294px; }
.hname { font: 600 19.300px/26px "Open Sans", sans-serif; letter-spacing: 3.200px; margin: 40px 0 0 11px; width: 254px; -webkit-text-stroke: .3px #fff; }
.offer { width: 328.500px; padding-top: 24px; font: 700 25.200px/28px "Open Sans", "Noto Sans", sans-serif; letter-spacing: .35px; white-space: nowrap; }
.pink { color: #ff5082; letter-spacing: .55px; }
.timer { display: flex; padding-top: 12px; width: 390.500px; }
.unit { width: 56.400px; }
.num { height: 56px; border-radius: 11px; background: #fff; color: #3c3c52; font: 700 24.500px/60px "Open Sans", sans-serif; text-align: center; box-shadow: 0 3px 12px rgba(0, 0, 0, .16); }
.ulabel { text-align: center; font: 700 12.500px/20px "Open Sans", "Noto Sans", sans-serif; margin-top: 6px; }
.colon { width: 17px; text-align: center; font: 700 18px/20px "Open Sans", sans-serif; margin-top: 21px; }
.cta { width: 243px; height: 49px; margin-top: 27px; border: 0; padding: 1px 0 0; border-radius: 6px; background: #ff5286; color: #fff; font: 700 18.300px/24px "Open Sans", sans-serif; }
.bx { position: absolute; right: 12px; top: 14px; }

.scroll { width: 21px; background: #f1f1f1; display: flex; flex-direction: column; align-items: center; padding: 9px 0 8px; }
.thumb { width: 17px; height: 292px; margin-top: 6px; background: #c1c1c1; }
.down { margin-top: auto; }

/* taskbar */
.taskbar { height: 50px; flex: none; display: flex; background: linear-gradient(90deg, #d5e3ec 0, #d4e4ec 600px, #d5e6ea 1100px, #d3dfe6 1370px, #d7dcdb 1430px, #d2dfe7 1490px, #cfe0e9 1700px, #d2e3e7 1920px); }
.start { width: 60px; display: flex; align-items: center; justify-content: center; }
.search { width: 429px; background: #fff; border: 1px solid #bfc3c6; display: flex; align-items: center; padding-left: 14px; gap: 14px; color: #333; font-size: 17.600px; }
.task { width: 62px; display: flex; align-items: center; justify-content: center; position: relative; }
.task.taskview { padding-right: 4px; }
.task.active { background: #edf3f6; }
.task.open::after, .task.multi::after, .task.active::after { content: ""; position: absolute; left: 6px; right: 5px; bottom: 0; height: 3px; background: #0078d7; }
.task.active::after { left: 0; right: 0; }
.task.multi::after { background: linear-gradient(90deg, #0078d7 41px, #67aee4 41px); }
.tray { margin-left: auto; display: flex; align-items: center; color: #1c1c1c; font-size: 14.300px; }
.t-bat { margin-left: 13px; }
.t-wifi { margin-left: 12px; }
.t-vol { margin-left: 11px; }
.lang, .clock { display: flex; flex-direction: column; line-height: 22px; }
.lang { margin-left: 17px; width: 24px; font-size: 14px; }
.clock { width: 78px; margin-left: 16px; align-items: center; }
.t-note { margin: 8px 0 0 22px; }
.peek { width: 1px; height: 50px; background: #a8b6bd; margin: 0 5px 0 13px; }
</style>
